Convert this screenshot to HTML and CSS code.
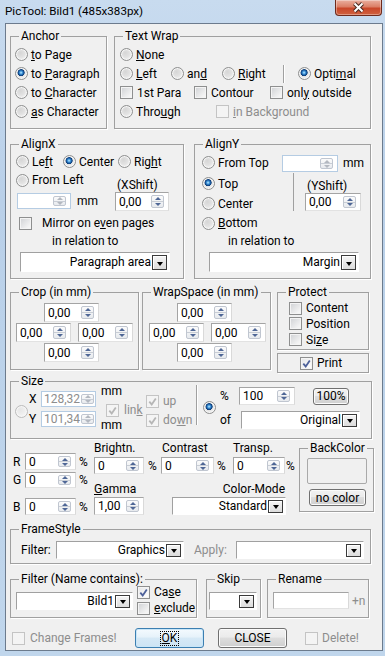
FILE: index.html
```html
<!DOCTYPE html>
<html>
  <head>
    <meta charset="utf-8">
    <title>PicTool</title>
    <link rel="stylesheet" href="styles.css">
  </head>
  <body>
    <!-- 标题栏 -->
    <div class="titlebar">
      <span class="title">PicTool: Bild1 (485x383px)</span>
      <span class="close">
        <svg width="13" height="11" viewBox="0 0 13 11"><path d="M2.5 1.5l8 8m0-8l-8 8" stroke="#4a2a22" stroke-width="4"/><path d="M2.5 1.5l8 8m0-8l-8 8" stroke="#fff" stroke-width="2"/></svg>
      </span>
    </div>
    <div class="client">
      <!-- 锚点 + 文字环绕 -->
      <div class="row r1">
        <fieldset class="g anchor">
          <legend>Anchor</legend>
          <label class="opt"><span class="rb"></span><span><u>t</u>o Page</span></label>
          <label class="opt"><span class="rb on"></span><span>to <u>P</u>aragraph</span></label>
          <label class="opt"><span class="rb"></span><span>to <u>C</u>haracter</span></label>
          <label class="opt"><span class="rb"></span><span><u>a</u>s Character</span></label>
        </fieldset>
        <fieldset class="g wrap">
          <legend>Text Wrap</legend>
          <div class="line"><label class="opt"><span class="rb"></span><span><u>N</u>one</span></label></div>
          <div class="line">
            <label class="opt w51"><span class="rb"></span><span><u>L</u>eft</span></label>
            <label class="opt w51"><span class="rb"></span><span>an<u>d</u></span></label>
            <label class="opt w61"><span class="rb"></span><span><u>R</u>ight</span></label>
            <span class="vsep"></span>
            <label class="opt optimal"><span class="rb on"></span><span>Opti<u>m</u>al</span></label>
          </div>
          <div class="line">
            <label class="opt w74"><span class="cb"></span><span>1st Para</span></label>
            <label class="opt w76"><span class="cb"></span><span>Contour</span></label>
            <label class="opt"><span class="cb"></span><span>onl<u>y</u> outside</span></label>
          </div>
          <div class="line">
            <label class="opt w96"><span class="rb"></span><span>Thro<u>u</u>gh</span></label>
            <label class="opt dim"><span class="cb dis"></span><span><u>i</u>n Background</span></label>
          </div>
        </fieldset>
      </div>

      <!-- 水平 / 垂直对齐 -->
      <div class="row r2">
        <fieldset class="g alx">
          <legend>AlignX</legend>
          <div class="line h19">
            <label class="opt w47"><span class="rb"></span><span>Le<u>f</u>t</span></label>
            <label class="opt w55"><span class="rb on"></span><span>Center</span></label>
            <label class="opt"><span class="rb"></span><span>Rig<u>h</u>t</span></label>
          </div>
          <div class="row">
            <div class="col w99">
              <label class="opt h18"><span class="rb"></span><span>From Left</span></label>
              <div class="line from-left">
                <span class="spin dis w54 h16"><span class="v"></span><span class="ud"><i></i><i></i></span></span>
                <span class="unit">mm</span>
              </div>
            </div>
            <div class="col">
              <span class="shift-cap">(XShift)</span>
              <span class="spin w54 h19"><span class="v">0,00</span><span class="ud"><i></i><i></i></span></span>
            </div>
          </div>
          <label class="opt mirror"><span class="cb"></span><span>Mirror on e<u>v</u>en pages</span></label>
          <div class="rel">in relation to</div>
          <span class="combo w150 h20"><span class="v">Paragraph area</span><span class="dd"></span></span>
        </fieldset>
        <fieldset class="g aly">
          <legend>AlignY</legend>
          <div class="line h21">
            <label class="opt w80"><span class="rb"></span><span>From Top</span></label>
            <span class="spin dis w56 h17 top3"><span class="v"></span><span class="ud"><i></i><i></i></span></span>
            <span class="unit">mm</span>
          </div>
          <div class="row">
            <div class="col w91">
              <label class="opt h21"><span class="rb on"></span><span>Top</span></label>
              <label class="opt"><span class="rb"></span><span>Center</span></label>
              <label class="opt h20"><span class="rb"></span><span><u>B</u>ottom</span></label>
            </div>
            <div class="col yshift">
              <span class="shift-cap">(YShift)</span>
              <span class="spin w56 h18"><span class="v">0,00</span><span class="ud"><i></i><i></i></span></span>
            </div>
          </div>
          <div class="rel">in relation to</div>
          <span class="combo w150 h20"><span class="v">Margin</span><span class="dd"></span></span>
        </fieldset>
      </div>

      <!-- 裁剪 / 环绕间距 / 保护 -->
      <div class="row r3">
        <fieldset class="g crop">
          <legend>Crop (in mm)</legend>
          <span class="spin w55 h19 mid"><span class="v">0,00</span><span class="ud"><i></i><i></i></span></span>
          <div class="line pair">
            <span class="spin w55 h19"><span class="v">0,00</span><span class="ud"><i></i><i></i></span></span>
            <span class="spin w55 h19"><span class="v">0,00</span><span class="ud"><i></i><i></i></span></span>
          </div>
          <span class="spin w55 h19 mid"><span class="v">0,00</span><span class="ud"><i></i><i></i></span></span>
        </fieldset>
        <fieldset class="g crop space">
          <legend>WrapSpace (in mm)</legend>
          <span class="spin w55 h19 mid"><span class="v">0,00</span><span class="ud"><i></i><i></i></span></span>
          <div class="line pair">
            <span class="spin w55 h19"><span class="v">0,00</span><span class="ud"><i></i><i></i></span></span>
            <span class="spin w55 h19"><span class="v">0,00</span><span class="ud"><i></i><i></i></span></span>
          </div>
          <span class="spin w55 h19 mid"><span class="v">0,00</span><span class="ud"><i></i><i></i></span></span>
        </fieldset>
        <div class="col protect-col">
          <fieldset class="g protect">
            <legend>Protect</legend>
            <label class="opt h16"><span class="cb"></span><span>Content</span></label>
            <label class="opt h15"><span class="cb"></span><span>Position</span></label>
            <label class="opt h17"><span class="cb"></span><span>Si<u>z</u>e</span></label>
          </fieldset>
          <label class="opt print"><span class="cb on"><svg viewBox="0 0 11 11"><path d="M2.3 5.6l2.4 2.8L8.8 2.4"/></svg></span><span>Print</span></label>
        </div>
      </div>

      <!-- 尺寸 -->
      <div class="row r4">
        <fieldset class="g size">
          <legend>Size</legend>
          <div class="row">
            <span class="rb dis size-rb"></span>
            <div class="col xy">
              <div class="line"><span class="axis">X</span><span class="spin dis tight w55 h16"><span class="v">128,32</span><span class="ud"><i></i><i></i></span></span></div>
              <div class="line mt4"><span class="axis">Y</span><span class="spin dis tight w55 h16"><span class="v">101,34</span><span class="ud"><i></i><i></i></span></span></div>
            </div>
            <div class="col mm-col">
              <span>mm</span>
              <label class="opt h16 link dim"><span class="cb dis on"><svg viewBox="0 0 11 11"><path d="M2.3 5.6l2.4 2.8L8.8 2.4"/></svg></span><span>lin<u>k</u></span></label>
              <span>mm</span>
            </div>
            <div class="col updown">
              <label class="opt h16 dim"><span class="cb dis on"><svg viewBox="0 0 11 11"><path d="M2.3 5.6l2.4 2.8L8.8 2.4"/></svg></span><span>up</span></label>
              <label class="opt h16 dim"><span class="cb dis on"><svg viewBox="0 0 11 11"><path d="M2.3 5.6l2.4 2.8L8.8 2.4"/></svg></span><span>do<u>w</u>n</span></label>
            </div>
            <span class="vsep tall"></span>
            <span class="rb on pct-rb"></span>
            <div class="col">
              <div class="line pct-line">
                <span class="w19">%</span>
                <span class="spin w56 h18"><span class="v">100</span><span class="ud"><i></i><i></i></span></span>
                <span class="btn w36 h17 full">100%</span>
              </div>
              <div class="line of-line">
                <span class="w21">of</span>
                <span class="combo w119 h18"><span class="v">Original</span><span class="dd"></span></span>
              </div>
            </div>
          </div>
        </fieldset>
      </div>

      <!-- 颜色调整 -->
      <div class="row r5">
        <div class="col rgb">
          <div class="line rgb-r"><span class="axis w11">R</span><span class="spin w51 h17"><span class="v">0</span><span class="ud"><i></i><i></i></span></span><span class="pc">%</span></div>
          <div class="line rgb-g"><span class="axis w11">G</span><span class="spin w51 h16"><span class="v">0</span><span class="ud"><i></i><i></i></span></span><span class="pc">%</span></div>
          <div class="line rgb-b"><span class="axis w11">B</span><span class="spin w51 h17"><span class="v">0</span><span class="ud"><i></i><i></i></span></span><span class="pc">%</span></div>
        </div>
        <div class="col tone">
          <div class="row">
            <div class="col w68">
              <span>Brightn.</span>
              <div class="line mt2"><span class="spin w50 h17"><span class="v">0</span><span class="ud"><i></i><i></i></span></span><span class="pc4">%</span></div>
            </div>
            <div class="col w71">
              <span>Contrast</span>
              <div class="line mt2 ml-1"><span class="spin w53 h17"><span class="v">0</span><span class="ud"><i></i><i></i></span></span><span class="pc">%</span></div>
            </div>
            <div class="col">
              <span>Transp.</span>
              <div class="line mt2"><span class="spin w52 h17"><span class="v">0</span><span class="ud"><i></i><i></i></span></span><span class="pc1">%</span></div>
            </div>
          </div>
          <div class="row mt8">
            <div class="col w78">
              <span><u>G</u>amma</span>
              <span class="spin w50 h18 mt1"><span class="v">1,00</span><span class="ud"><i></i><i></i></span></span>
            </div>
            <div class="col w114">
              <span class="mode-cap">Color-Mode</span>
              <span class="combo w114 h18 mt1"><span class="v">Standard</span><span class="dd"></span></span>
            </div>
          </div>
        </div>
        <fieldset class="g back">
          <legend>BackColor</legend>
          <span class="swatch"></span>
          <span class="btn nocolor">no color</span>
        </fieldset>
      </div>

      <!-- 边框样式 -->
      <div class="row r6">
        <fieldset class="g frame">
          <legend>FrameStyle</legend>
          <div class="line mt4">
            <span class="w35">Filter:</span>
            <span class="combo w128 h18"><span class="v">Graphics</span><span class="dd"></span></span>
            <span class="w42 dim apply">Apply:</span>
            <span class="combo w128 h18"><span class="v"></span><span class="dd"></span></span>
          </div>
        </fieldset>
      </div>

      <!-- 过滤 / 跳过 / 重命名 -->
      <div class="row r7">
        <fieldset class="g filter">
          <legend>Filter (Name contains):</legend>
          <div class="row">
            <span class="combo w117 h18 mt5"><span class="v">Bild1</span><span class="dd"></span></span>
            <div class="col cases">
              <label class="opt h16"><span class="cb on"><svg viewBox="0 0 11 11"><path d="M2.3 5.6l2.4 2.8L8.8 2.4"/></svg></span><span>Ca<u>s</u>e</span></label>
              <label class="opt h16"><span class="cb"></span><span><u>e</u>xclude</span></label>
            </div>
          </div>
        </fieldset>
        <fieldset class="g skip">
          <legend>Skip</legend>
          <span class="combo w48 h18 mt5"><span class="v"></span><span class="dd"></span></span>
        </fieldset>
        <fieldset class="g rename">
          <legend>Rename</legend>
          <div class="line mt5">
            <span class="edit w76 h17"></span>
            <span class="dim plus">+n</span>
          </div>
        </fieldset>
      </div>

      <!-- 底部按钮 -->
      <div class="line r8">
        <label class="opt dim change"><span class="cb dis"></span><span>Change Frames!</span></label>
        <span class="btn ok w69 h20"><span><u>O</u>K</span></span>
        <span class="btn w69 h20 close-btn">CLOSE</span>
        <label class="opt dim delete"><span class="cb dis"></span><span>Delete!</span></label>
      </div>
    </div>
  </body>
</html>
```

FILE: styles.css
```css
/* -------- 基础 ------------- */
* {
  box-sizing: border-box;
}
body {
  margin: 0;
  width: 385px;
  height: 656px;
  overflow: hidden;
  background: linear-gradient(#c8dbef, #b9d0e9 30%, #c0d6ec);
  font: 12px/14px Roboto, "Noto Sans", sans-serif;
  color: #000;
}
u {
  text-underline-offset: 1px;
}
.dim {
  color: #8d8d8d;
}
/* -------- 标题栏 ------------- */
.titlebar {
  display: flex;
  align-items: flex-start;
  height: 23px;
}
.title {
  padding: 4px 0 0 5px;
  font-size: 11.6px;
}
.close {
  display: flex;
  align-items: center;
  justify-content: center;
  width: 47px;
  height: 16px;
  margin: 0 3px 0 auto;
  border: 1px solid #6e2a1c;
  border-top: 0;
  border-radius: 0 0 4px 4px;
  background: linear-gradient(#eab0a0, #db7f66 45%, #c9472a 55%, #d0623f);
  box-shadow: inset 0 0 0 1px rgba(255, 255, 255, .35);
}
/* -------- 客户区 ------------- */
.client {
  width: 378px;
  height: 628px;
  margin-left: 5px;
  padding-left: 4px;
  border: 1px solid #6c7b8d;
  background: #f0f0f0;
}
.row {
  display: flex;
  align-items: flex-start;
}
.line {
  display: flex;
  align-items: center;
}
.col {
  display: flex;
  flex-direction: column;
  align-items: flex-start;
}
/* 分组框 */
.g {
  margin: 0;
  padding: 0 0 0 var(--pl, 0px);
  min-width: 0;
  border: 1px solid #a0a0a0;
  box-shadow: 1px 1px 0 #fff;
}
.g > legend {
  margin-left: calc(8px - var(--pl, 0px));
  padding: 0 2px;
  line-height: 15px;
}
/* 单选 / 复选 */
.opt {
  display: flex;
  align-items: center;
  height: 19px;
  white-space: nowrap;
}
.rb, .cb {
  flex: none;
  width: 13px;
  height: 13px;
  border: 1px solid #8e8f8f;
}
.rb {
  margin-right: 3px;
  border-radius: 50%;
  background: radial-gradient(circle at 40% 35%, #d6d6d6, #e2e2e2 45%, #fbfbfb 90%);
  box-shadow: inset 0 0 0 1px #f6f6f6;
}
.rb.on {
  background:
    radial-gradient(circle at 46% 42%, #c2ecff 0, #3d95db 1.5px, #124a8c 2.8px, #0f3f7a 3.3px, transparent 3.8px),
    radial-gradient(circle at 40% 35%, #d6d6d6, #e2e2e2 45%, #fbfbfb 90%);
}
.rb.dis {
  border-color: #bcbcbc;
  background: radial-gradient(circle at 40% 35%, #e6e6e6, #eeeeee 45%, #fafafa 90%);
}
.cb {
  margin-right: 4px;
  background: linear-gradient(135deg, #cfd1d4, #f4f4f4 80%);
  box-shadow: inset 0 0 0 1px #f4f4f4;
}
.cb.on {
  background: linear-gradient(135deg, #e4e5e7, #fbfbfb 80%);
}
.cb.dis {
  border-color: #c4c4c4;
  background: #f4f4f4;
}
.cb svg {
  display: block;
  width: 11px;
  height: 11px;
}
.cb path {
  fill: none;
  stroke: #4d619a;
  stroke-width: 1.8;
}
.cb.dis path {
  stroke: #b6b6b6;
}
/* 数值框 / 下拉框 */
.spin, .combo, .edit {
  display: flex;
  flex: none;
  align-items: center;
  background: #fff;
  border: 1px solid;
  border-color: #a4a4a4 #d9d9d9 #e2e2e2 #a4a4a4;
}
.spin .v {
  flex: 1;
  padding-left: 3px;
  white-space: nowrap;
  overflow: hidden;
}
.spin.dis {
  border-color: #b5cce3;
  color: #8d8d8d;
}
.ud {
  display: flex;
  flex-direction: column;
  flex: none;
  align-self: stretch;
  width: 13px;
  margin: 2px 4px 2px 0;
  border: 1px solid #c0c6d0;
  border-radius: 2px;
  background: linear-gradient(#fbfbfb, #e7eaee);
}
.spin.tight .v {
  padding-left: 2px;
}
.spin.tight .ud {
  margin-right: 1px;
}
.ud i {
  display: flex;
  flex: 1;
  align-items: center;
  justify-content: center;
}
.ud i + i {
  border-top: 1px solid #c8cdd5;
}
.ud i::before {
  content: '';
  border: 3px solid transparent;
  border-top: 0;
  border-bottom: 3px solid #4f6796;
}
.ud i + i::before {
  border-top: 3px solid #4f6796;
  border-bottom: 0;
}
.spin.dis .ud i::before {
  border-bottom-color: #b3b8c0;
}
.spin.dis .ud i + i::before {
  border-top-color: #b3b8c0;
}
.combo {
  border-color: #a0a0a0 #fff #fff #a0a0a0;
}
.combo .v {
  flex: 1;
  text-align: right;
  white-space: nowrap;
}
.dd {
  display: flex;
  flex: none;
  align-self: stretch;
  align-items: flex-end;
  justify-content: center;
  width: 15px;
  margin: 2px 2px 1px 1px;
  padding-bottom: 3px;
  border: 1px solid #3a3a3a;
  background: linear-gradient(#f5f5f5, #dcdcdc);
  box-shadow: inset 1px 1px 0 #fff;
}
.dd::before {
  content: '';
  border-left: 3.5px solid transparent;
  border-right: 3.5px solid transparent;
  border-top: 4px solid #000;
}
/* 按钮 */
.btn {
  display: flex;
  flex: none;
  align-items: center;
  justify-content: center;
  border: 1px solid #707070;
  border-radius: 3px;
  background: linear-gradient(#f2f2f2, #ebebeb 45%, #dddddd 50%, #cfcfcf);
  box-shadow: inset 0 0 0 1px #fbfbfb;
}
.btn.ok {
  border-color: #3c7fb1;
  background: linear-gradient(#f4fafe, #e6f2fa 45%, #d6e9f6 50%, #cde4f4);
  box-shadow: inset 0 0 0 1px #c9e6f8;
}
.btn.ok > span {
  padding: 0 1px;
  line-height: 13px;
  outline: 1px dotted #000;
}
.vsep {
  flex: none;
  width: 1px;
  height: 18px;
  background: #a0a0a0;
  box-shadow: 1px 0 0 #fff;
}
/* 尺寸工具类 */
.w11 { width: 11px; }
.w19 { width: 19px; }
.w21 { width: 21px; }
.w35 { width: 35px; }
.w36 { width: 36px; }
.w42 { width: 42px; }
.w47 { width: 47px; }
.w48 { width: 48px; }
.w50 { width: 50px; }
.w51 { width: 51px; }
.w52 { width: 52px; }
.w53 { width: 53px; }
.w54 { width: 54px; }
.w55 { width: 55px; }
.w56 { width: 56px; }
.w61 { width: 61px; }
.w68 { width: 68px; }
.w69 { width: 69px; }
.w71 { width: 71px; }
.w74 { width: 74px; }
.w76 { width: 76px; }
.w78 { width: 78px; }
.w80 { width: 80px; }
.w91 { width: 91px; }
.w96 { width: 96px; }
.w99 { width: 99px; }
.w114 { width: 114px; }
.w117 { width: 117px; }
.w119 { width: 119px; }
.w128 { width: 128px; }
.w150 { width: 150px; }
.h15 { height: 15px; }
.h16 { height: 16px; }
.h17 { height: 17px; }
.h18 { height: 18px; }
.h19 { height: 19px; }
.h20 { height: 20px; }
.h21 { height: 21px; }
.mt1 { margin-top: 1px; }
.mt2 { margin-top: 2px; }
.mt4 { margin-top: 4px; }
.mt5 { margin-top: 5px; }
.mt8 { margin-top: 8px; }
.top3 { align-self: flex-start; margin-top: 3px; }
/* -------- 第一行 ------------- */
.r1 {
  margin-top: 5px;
}
.anchor {
  --pl: 4px;
  width: 97px;
  height: 100px;
  padding-top: 1px;
}
.wrap {
  --pl: 5px;
  width: 257px;
  height: 100px;
  margin-left: 7px;
  padding-top: 1px;
}
.optimal {
  margin-left: 14px;
}
/* -------- 第二行 ------------- */
.r2 {
  margin-top: 8px;
}
.alx {
  --pl: 5px;
  width: 174px;
  height: 142px;
}
.from-left {
  margin-top: 4px;
}
.from-left .spin {
  margin-left: 1px;
}
.unit {
  margin-left: 6px;
}
.shift-cap {
  margin: 7px 0 0 2px;
}
.mirror {
  height: 18px;
  margin-top: 3px;
  padding-left: 3px;
}
.mirror .cb {
  margin-right: 10px;
}
.rel {
  margin-top: 2px;
  padding-left: 36px;
}
.alx .combo, .aly .combo {
  margin: 4px 0 0 4px;
}
.aly {
  --pl: 7px;
  width: 177px;
  height: 142px;
  margin-left: 10px;
}
.aly .unit {
  margin-left: 5px;
}
.yshift {
  height: 38px;
  padding-left: 11px;
  border-left: 1px solid #a0a0a0;
}
.yshift .shift-cap {
  margin-top: 6px;
}
.aly .rel {
  margin-top: 1px;
  padding-left: 26px;
}
.aly .combo {
  margin-left: 7px;
}
/* -------- 第三行 ------------- */
.r3 {
  margin-top: 6px;
}
.crop {
  --pl: 5px;
  width: 129px;
  height: 85px;
}
.crop .mid {
  margin: 3px 0 0 28px;
}
.crop .mid:last-child {
  margin-top: 1px;
}
.pair {
  gap: 7px;
  margin-top: 1px;
}
.space {
  --pl: 6px;
  margin-left: 3px;
}
.protect-col {
  width: 92px;
  margin-left: 6px;
}
.protect {
  --pl: 11px;
  width: 92px;
  height: 65px;
}
.print {
  width: 92px;
  height: 20px;
  margin-top: 3px;
  padding-left: 22px;
  border: 1px solid #a0a0a0;
  box-shadow: 1px 1px 0 #fff;
}
/* -------- 尺寸 ------------- */
.r4 {
  margin-top: 1px;
}
.size {
  --pl: 4px;
  width: 362px;
  height: 65px;
}
.size-rb {
  margin: 16px 1px 0 0;
}
.xy {
  margin-top: 2px;
}
.axis {
  width: 12px;
}
.mm-col {
  width: 45px;
  margin: -5px 0 0 5px;
}
.link {
  margin-top: 4px;
  padding-left: 5px;
}
.link .cb {
  margin-right: 5px;
}
.updown {
  width: 50px;
}
.updown .opt:first-child {
  margin-top: 4px;
}
.updown .opt + .opt {
  margin-top: 3px;
}
.vsep.tall {
  height: 40px;
  margin-top: -4px;
}
.pct-rb {
  margin: 12px 4px 0 6px;
}
.pct-line {
  margin-top: -2px;
}
.full {
  margin-left: 18px;
}
.of-line {
  margin-top: 6px;
}
/* -------- 颜色 ------------- */
.r5 {
  height: 77px;
}
.rgb {
  width: 81px;
  margin-left: 3px;
}
.rgb-r {
  margin-top: 14px;
}
.rgb-g {
  margin-top: 2px;
}
.rgb-b {
  margin-top: 10px;
}
.pc {
  margin-left: 3px;
}
.pc4 {
  margin-left: 4px;
}
.pc1 {
  margin-left: 1px;
}
.tone {
  width: 205px;
  margin-top: 2px;
}
.ml-1 {
  margin-left: -1px;
}
.mode-cap {
  align-self: stretch;
  padding-right: 1px;
  text-align: right;
}
.back {
  --pl: 7px;
  width: 75px;
  height: 71px;
  margin-top: 2px;
}
.swatch {
  display: block;
  width: 60px;
  height: 26px;
  margin-top: 2px;
  border: 1px solid #a9a9a9;
  border-radius: 2px;
}
.nocolor {
  width: 57px;
  height: 17px;
  margin: 5px 0 0 2px;
}
/* -------- 边框样式 ------------- */
.r6 {
  margin-top: 6px;
}
.frame {
  --pl: 10px;
  width: 361px;
  height: 42px;
}
.apply {
  margin-left: 10px;
}
/* -------- 过滤 ------------- */
.r7 {
  margin-top: 8px;
}
.filter {
  --pl: 5px;
  width: 187px;
  height: 46px;
}
.cases {
  margin: -3px 0 0 4px;
}
.skip {
  --pl: 2px;
  width: 55px;
  height: 46px;
  margin-left: 9px;
}
.rename {
  --pl: 5px;
  width: 102px;
  height: 46px;
  margin-left: 6px;
}
.plus {
  margin-left: 3px;
}
/* -------- 底部 ------------- */
.r8 {
  height: 20px;
  margin-top: 10px;
}
.change {
  width: 123px;
  margin-left: 2px;
}
.change .cb {
  margin-right: 5px;
}
.close-btn {
  margin-left: 14px;
}
.delete {
  margin-left: 18px;
}
```
